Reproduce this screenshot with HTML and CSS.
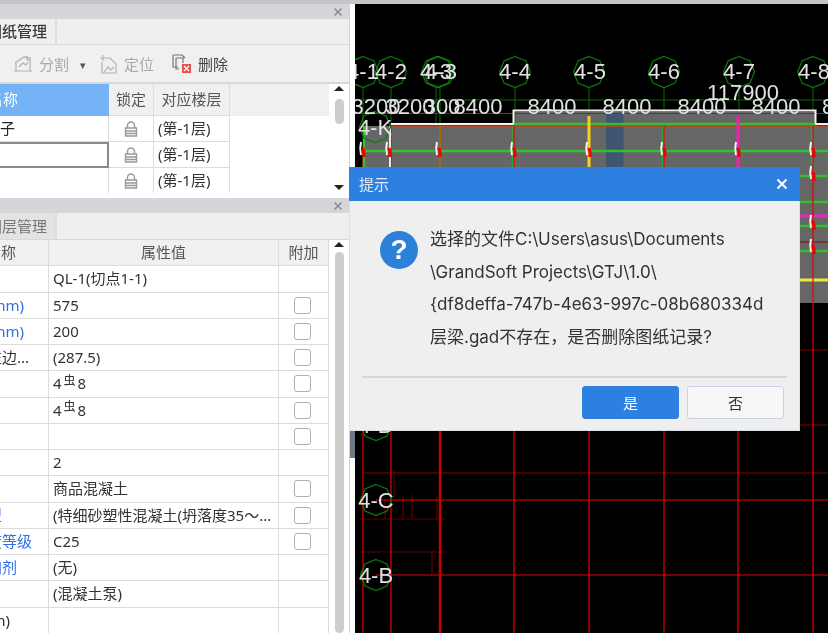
FILE: index.html
```html
<!DOCTYPE html>
<html lang="zh">
<head>
<meta charset="utf-8">
<title>GTJ</title>
<link rel="stylesheet" href="styles.css">
</head>
<body>
<div class="app">
  <div class="topbar"></div>
  <div class="main">
    <div class="side">
      <section class="panel panel-a">
        <div class="panel-head"><svg class="x" viewBox="0 0 10 10"><path d="M1.5 1.5l7 7M8.5 1.5l-7 7"/></svg></div>
        <div class="tabs"><div class="tab active">图纸管理</div></div>
        <div class="toolbar">
          <span class="tool-arrow">▾</span>
          <span class="tool off">
            <svg class="ti" viewBox="0 0 20 20"><path class="ti-off" d="M2 9l9-6 6 1v13H3V9M6 13l4-4 3 2 2-3M14 2v4h4M1 17h18"/></svg>分割
          </span>
          <span class="drop">▾</span>
          <span class="tool off tool-pos">
            <svg class="ti" viewBox="0 0 20 20"><path class="ti-off" d="M8 4h4l6 6v9H4V8M6 18l4-5 3 3 3-3M5 1v6M2 4h6"/></svg>定位
          </span>
          <span class="tool tool-del">
            <svg class="ti" viewBox="0 0 20 20"><path class="ti-dark" d="M1 1h9l3 3M1 1v12h5M4 4h7v5M4 4v11h3"/><rect class="ti-red" x="10" y="10" width="9" height="9"/><path class="ti-white" d="M12 12l5 5M17 12l-5 5"/></svg>删除
          </span>
        </div>
        <div class="table-wrap">
          <div class="grid grid-a">
            <div class="cell head sel">图纸名称</div><div class="cell head ctr">锁定</div><div class="cell head ctr">对应楼层</div><div class="cell head blank"></div>
            <div class="cell name-a">首层柱子</div><div class="cell ctr"><svg class="lock" viewBox="0 0 14 16"><use href="#lock"/></svg></div><div class="cell val">(第-1层)</div><div class="blank"></div>
            <div class="cell name-a focus"></div><div class="cell ctr"><svg class="lock" viewBox="0 0 14 16"><use href="#lock"/></svg></div><div class="cell val">(第-1层)</div><div class="blank"></div>
            <div class="cell name-a"></div><div class="cell ctr"><svg class="lock" viewBox="0 0 14 16"><use href="#lock"/></svg></div><div class="cell val">(第-1层)</div><div class="blank"></div>
          </div>
          <div class="scroll">
            <span class="up"></span>
            <span class="thumb thumb-a"></span>
            <span class="down"></span>
          </div>
        </div>
      </section>
      <section class="panel panel-b">
        <div class="panel-head"><svg class="x" viewBox="0 0 10 10"><path d="M1.5 1.5l7 7M8.5 1.5l-7 7"/></svg></div>
        <div class="tabs"><div class="tab idle">图层管理</div></div>
        <div class="table-wrap">
          <div class="grid grid-b">
            <div class="cell head ctr">属性名称</div><div class="cell head ctr">属性值</div><div class="cell head ctr">附加</div>
            <div class="cell nm">名称</div><div class="cell val">QL-1(切点1-1)</div><div class="cell"></div>
            <div class="cell nm link">截面高度(mm)</div><div class="cell val">575</div><div class="cell ctr"><i class="chk"></i></div>
            <div class="cell nm link">截面宽度(mm)</div><div class="cell val">200</div><div class="cell ctr"><i class="chk"></i></div>
            <div class="cell nm">轴线距梁左边...</div><div class="cell val">(287.5)</div><div class="cell ctr"><i class="chk"></i></div>
            <div class="cell nm">上部钢筋</div><div class="cell val">4<small class="bar">虫</small>8</div><div class="cell ctr"><i class="chk"></i></div>
            <div class="cell nm">下部钢筋</div><div class="cell val">4<small class="bar">虫</small>8</div><div class="cell ctr"><i class="chk"></i></div>
            <div class="cell nm">侧面钢筋</div><div class="cell val"></div><div class="cell ctr"><i class="chk"></i></div>
            <div class="cell nm">肢数</div><div class="cell val">2</div><div class="cell"></div>
            <div class="cell nm">材质</div><div class="cell val">商品混凝土</div><div class="cell ctr"><i class="chk"></i></div>
            <div class="cell nm link">混凝土类型</div><div class="cell val">(特细砂塑性混凝土(坍落度35～...</div><div class="cell ctr"><i class="chk"></i></div>
            <div class="cell nm link">混凝土强度等级</div><div class="cell val">C25</div><div class="cell ctr"><i class="chk"></i></div>
            <div class="cell nm link">混凝土外加剂</div><div class="cell val">(无)</div><div class="cell"></div>
            <div class="cell nm">泵送类型</div><div class="cell val">(混凝土泵)</div><div class="cell"></div>
            <div class="cell nm">泵送高度(m)</div><div class="cell val"></div><div class="cell"></div>
          </div>
          <div class="scroll scroll-b">
            <span class="up"></span>
            <span class="thumb thumb-b"></span>
          </div>
        </div>
      </section>
    </div>
    <div class="strip"><span class="strip-thumb"></span></div>
    <svg class="cad" viewBox="355 4 473 629" preserveAspectRatio="xMinYMin slice">
      <defs>
        <polygon id="hex" points="0,-15.5 11,-11 15.5,0 11,11 0,15.5 -11,11 -15.5,0 -11,-11"/>
        <g id="tick"><path class="tw" d="M-2-9C-3-5-3 0-2 4"/><path class="tr" d="M0-3L1 1V6"/></g>
        <path id="lock" class="lock-p" d="M3.5 7V4.5a3.5 3.5 0 0 1 7 0V7M1.5 7h11v8h-11zM1.500 10h11M1.500 12.500h11"/>
      </defs>

      <path class="gray" d="M363 126H514V112H815V126H828V303H363z"/>
      <rect class="steel" x="606" y="113" width="17.500" height="56"/>

      <path class="dg" d="M360 100H828M360 113.500H828M363 87V126M391 87V126M436 87V126M440 87V126M515 87V126M589 87V112M664 87V112M739 87V112M813 87V112"/>

      <path class="wall" d="M391 124H513.500V110.500H815.500V124H828"/>
      <path class="gr" d="M514 124H815M363 151H828M800 176H828M800 202H828M800 226H828M800 251H828"/>
      <path class="orl" d="M391 126H828"/>
      <path class="mag3" d="M800 216H828"/>
      <path class="yel3" d="M800 280H828"/>
      <path class="drl" d="M800 242H828M800 350H828M800 425H828M363 473H828"/>
      <path class="drl2" d="M360 519H445M360 552H445M394 470V498M403 495V519M412 495V519M437 497V519M385 500V519M432 550V574"/>
      <path class="rd" d="M363 150V633M391 126V633M514 126V633M589 126V633M664 126V633M738 126V633M813 126V633M376 500H828M376 575H828"/>
      <path class="rd2" d="M440 303V633"/>

      <path class="gr" d="M364 126V170"/>
      <path class="wh2" d="M390 126V170"/>
      <path class="brn" d="M440 126V303"/>
      <path class="grt" d="M512.500 126V170M662.500 126V170M811.500 126V170"/>
      <path class="yel" d="M589 116V170"/>
      <path class="mag" d="M738 116V170"/>

      <use href="#tick" x="363" y="151"/><use href="#tick" x="389" y="151"/><use href="#tick" x="439" y="151"/>
      <use href="#tick" x="514" y="151"/><use href="#tick" x="589" y="151"/><use href="#tick" x="664" y="151"/>
      <use href="#tick" x="738" y="151"/><use href="#tick" x="813" y="151"/><use href="#tick" x="813" y="175"/>
      <use href="#tick" x="813" y="224"/><use href="#tick" x="813" y="248"/>

      <use class="hex" href="#hex" x="363" y="72"/><use class="hex" href="#hex" x="391" y="72"/>
      <use class="hex" href="#hex" x="437" y="72"/><use class="hex" href="#hex" x="439" y="72"/>
      <use class="hex" href="#hex" x="515" y="72"/><use class="hex" href="#hex" x="589" y="72"/>
      <use class="hex" href="#hex" x="664" y="72"/><use class="hex" href="#hex" x="739" y="72"/>
      <use class="hex" href="#hex" x="813" y="72"/>
      <use class="hex" href="#hex" x="375" y="127"/><use class="hex" href="#hex" x="376" y="425"/>
      <use class="hex" href="#hex" x="376" y="500"/><use class="hex" href="#hex" x="376" y="575"/>

      <g class="lbl">
        <text x="363" y="79">4-1</text><text x="391" y="79">4-2</text><text x="436" y="79">4-3</text><text x="441" y="79">4-3</text>
        <text x="515" y="79">4-4</text><text x="590" y="79">4-5</text><text x="664" y="79">4-6</text><text x="739" y="79">4-7</text><text x="814" y="79">4-8</text>
        <text x="375" y="135">4-K</text><text x="376" y="433">4-D</text><text x="376" y="508">4-C</text><text x="376" y="583">4-B</text>
        <text x="743" y="100">117900</text>
        <text x="376" y="114">3200</text><text x="410" y="114">3200</text><text x="442" y="114">300</text><text x="478" y="114">8400</text>
        <text x="552" y="114">8400</text><text x="627" y="114">8400</text><text x="702" y="114">8400</text><text x="776" y="114">8400</text><text x="828" y="114">8</text>
      </g>
    </svg>
  </div>

  <div class="dialog">
    <div class="dlg-head">
      <span>提示</span>
      <svg class="dlg-x" viewBox="0 0 12 12"><path d="M1.500 1.500l9 9M10.500 1.500l-9 9"/></svg>
    </div>
    <div class="dlg-body">
      <div class="q">?</div>
      <div class="msg">
        <p>选择的文件C:\Users\asus\Documents</p>
        <p>\GrandSoft Projects\GTJ\1.0\</p>
        <p>{df8deffa-747b-4e63-997c-08b680334d</p>
        <p>层梁.gad不存在，是否删除图纸记录?</p>
      </div>
    </div>
    <div class="dlg-foot">
      <button class="btn yes">是</button>
      <button class="btn no">否</button>
    </div>
  </div>
</div>
</body>
</html>
```
FILE: styles.css
```css
* { box-sizing: border-box; }
html, body { margin: 0; height: 100%; background: #fff; overflow: hidden; }
body { font: 15px/1 "Noto Sans", "Noto Sans CJK SC", sans-serif; color: #333; }
.app { width: 828px; height: 633px; display: flex; flex-direction: column; position: relative; overflow: hidden; filter: blur(.5px); }
.topbar { height: 4px; flex: none; background: #c4c5c7; }
.main { flex: 1; display: flex; min-height: 0; }

.side { width: 350px; flex: none; display: flex; flex-direction: column; gap: 5px; background: #fff; overflow: hidden; border-right: 1px solid #d0d2d6; }
.panel { display: flex; flex-direction: column; overflow: hidden; }
.panel-a { height: 189px; flex: none; }
.panel-b { flex: 1; min-height: 0; }
.panel-head { height: 15px; flex: none; background: #d5d6da; display: flex; justify-content: flex-end; align-items: center; padding-right: 6px; }
.x { width: 10px; height: 10px; }
.x path { fill: none; stroke: #8a8c90; stroke-width: 1.600; }

.tabs { height: 26px; flex: none; background: #efefef; border-bottom: 1px solid #d8d8d8; display: flex; }
.panel-b .tabs { height: 27px; }
.tab { width: 71px; margin-left: -14px; padding-left: 1px; display: flex; align-items: center; border-right: 2px solid #dcdcdc; white-space: nowrap; letter-spacing: 0; }
.tab.active { font-weight: 500; color: #3a3a3a; }
.tab.idle { background: #e3e3e3; color: #777; }

.toolbar { height: 39px; padding-top: 1px; flex: none; background: #f0f0f0; border-bottom: 2px solid #d8d8d8; display: flex; align-items: center; white-space: nowrap; }
.tool { display: flex; align-items: center; gap: 6px; }
.off { color: #a9a9a9; }
.tool-arrow { width: 18px; margin-left: -5px; color: #aaa; font-size: 10px; }
.drop { margin-left: 11px; width: 17px; color: #555; font-size: 11px; }
.tool-pos { margin-left: 1px; }
.tool-del { margin-left: 18px; color: #444; }
.ti { width: 20px; height: 20px; }
.ti path { fill: none; stroke-width: 1.200; }
.ti .ti-off { stroke: #b2b2b2; }
.ti .ti-dark { stroke: #777; }
.ti .ti-red { fill: #e2524e; }
.ti .ti-white { stroke: #fff; }

.table-wrap { flex: 1; min-height: 0; display: flex; background: #fff; overflow: hidden; }
.grid { flex: none; display: grid; align-content: start; }
.grid-a { width: 461px; margin-left: -132px; grid-template-columns: 241px 45px 76px 99px; grid-template-rows: 32px repeat(3, 26px); }
.grid-b { width: 405px; margin-left: -76px; grid-auto-rows: 26.25px; grid-template-columns: 125px 230px 50px; }
.cell { display: flex; align-items: center; border-right: 1px solid #dcdcdc; border-bottom: 1px solid #dcdcdc; white-space: nowrap; overflow: hidden; }
.head { background: #f0f0f0; color: #555; }
.ctr { justify-content: center; }
.sel { background: #73b3f6; color: #fff; justify-content: center; border-color: #73b3f6; }
.blank { border: 0; }
.head.blank { border-right: 0; border-bottom: 0; }
.name-a { padding-left: 87px; color: #222; }
.focus { border: 2px solid #8a8a8a; }
.val { padding-left: 4px; color: #333; }
.nm { padding-left: 3px; color: #333; }
.link { color: #2f6fee; }
.bar { font-size: 12px; margin: -6px 2px 0; }
.chk { width: 17px; height: 17px; margin-right: 2px; border: 1.500px solid #b0b0b0; border-radius: 3px; background: #fff; display: block; }
.lock { width: 14px; height: 16px; }
.lock-p { fill: none; stroke: #999; stroke-width: 1.400; }

.scroll { flex: 1; position: relative; display: flex; flex-direction: column; align-items: center; }
.up { margin-top: 2px; width: 0; height: 0; border: 5px solid transparent; border-top: 0; border-bottom: 5px solid #222; }
.down { position: absolute; bottom: 3px; width: 0; height: 0; border: 5px solid transparent; border-bottom: 0; border-top: 5px solid #222; }
.thumb { width: 9px; background: #cccccc; border-radius: 5px; }
.thumb-a { height: 25px; margin-top: 8px; }
.thumb-b { flex: 1; margin-top: 5px; }

.strip { width: 5px; flex: none; background: #fff; position: relative; }
.strip-thumb { position: absolute; left: 0; right: 0; top: 427px; height: 27px; background: #6d7883; }
.cad { flex: 1; min-width: 0; height: 100%; background: #000; display: block; }
.gray { fill: #666; }
.steel { fill: #3f5670; }
.dg { fill: none; stroke: #0b6a0b; stroke-width: 1; }
.wall { fill: none; stroke: #f2f2f2; stroke-width: 2; }
.gr { fill: none; stroke: #33c02c; stroke-width: 2.500; }
.grt { fill: none; stroke: #2fa52b; stroke-width: 1.500; }
.orl { fill: none; stroke: #c8401e; stroke-width: 1.500; }
.mag { fill: none; stroke: #f01fb0; stroke-width: 3; }
.mag3 { fill: none; stroke: #f01fc0; stroke-width: 3; }
.yel { fill: none; stroke: #f5d21a; stroke-width: 3; }
.yel3 { fill: none; stroke: #ece83a; stroke-width: 3; }
.brn { fill: none; stroke: #a8680c; stroke-width: 2; }
.wh2 { fill: none; stroke: #f0e0e0; stroke-width: 2; }
.drl { fill: none; stroke: #8a0000; stroke-width: 1.200; }
.drl2 { fill: none; stroke: #600000; stroke-width: 1.200; }
.rd { fill: none; stroke: #e80000; stroke-width: 1.200; }
.rd2 { fill: none; stroke: #c80000; stroke-width: 2.400; }
.tw { fill: none; stroke: #f4f4f4; stroke-width: 2; }
.tr { fill: none; stroke: #f00000; stroke-width: 3; }
.hex { fill: none; stroke: #0e7a0e; stroke-width: 1.200; }
.lbl text { font: 22px "Liberation Sans", sans-serif; fill: #e2e2e2; text-anchor: middle; }

.dialog { position: absolute; left: 349px; top: 167px; width: 451px; height: 264px; background: #efefef; border: 1px solid #d8dde6; border-top: 0; display: flex; flex-direction: column; }
.dlg-head { height: 34px; flex: none; background: #2d7fe0; color: #dfeaf8; padding: 0 10px; display: flex; align-items: center; justify-content: space-between; margin: 0 -1px; }
.dlg-x { width: 12px; height: 12px; margin-right: 2px; }
.dlg-x path { fill: none; stroke: #fff; stroke-width: 2; }
.dlg-body { flex: 1; display: flex; padding: 22px 0 0 30px; min-height: 0; }
.q { width: 38px; height: 38px; margin-top: 8px; border-radius: 50%; background: #2c80d8; color: #fff; font: bold 28px/38px "Liberation Sans", sans-serif; text-align: center; flex: none; }
.msg { margin-left: 12px; font: 17px "Inter", "Noto Sans CJK SC", sans-serif; color: #333; }
.msg p { margin: 0; height: 32.700px; line-height: 32.700px; white-space: nowrap; }
.dlg-foot { height: 54px; flex: none; margin: 0 12px; border-top: 2px solid #d6d6d8; display: flex; justify-content: flex-end; gap: 8px; padding: 8px 3px 0 0; }
.btn { width: 97px; height: 33px; border-radius: 3px; font: 15px "Noto Sans CJK SC", sans-serif; padding: 0; }
.yes { background: #2d7fe0; border: 1px solid #2d7fe0; color: #fff; }
.no { background: #f7f7f7; border: 1px solid #c9d3e3; color: #333; }
```
